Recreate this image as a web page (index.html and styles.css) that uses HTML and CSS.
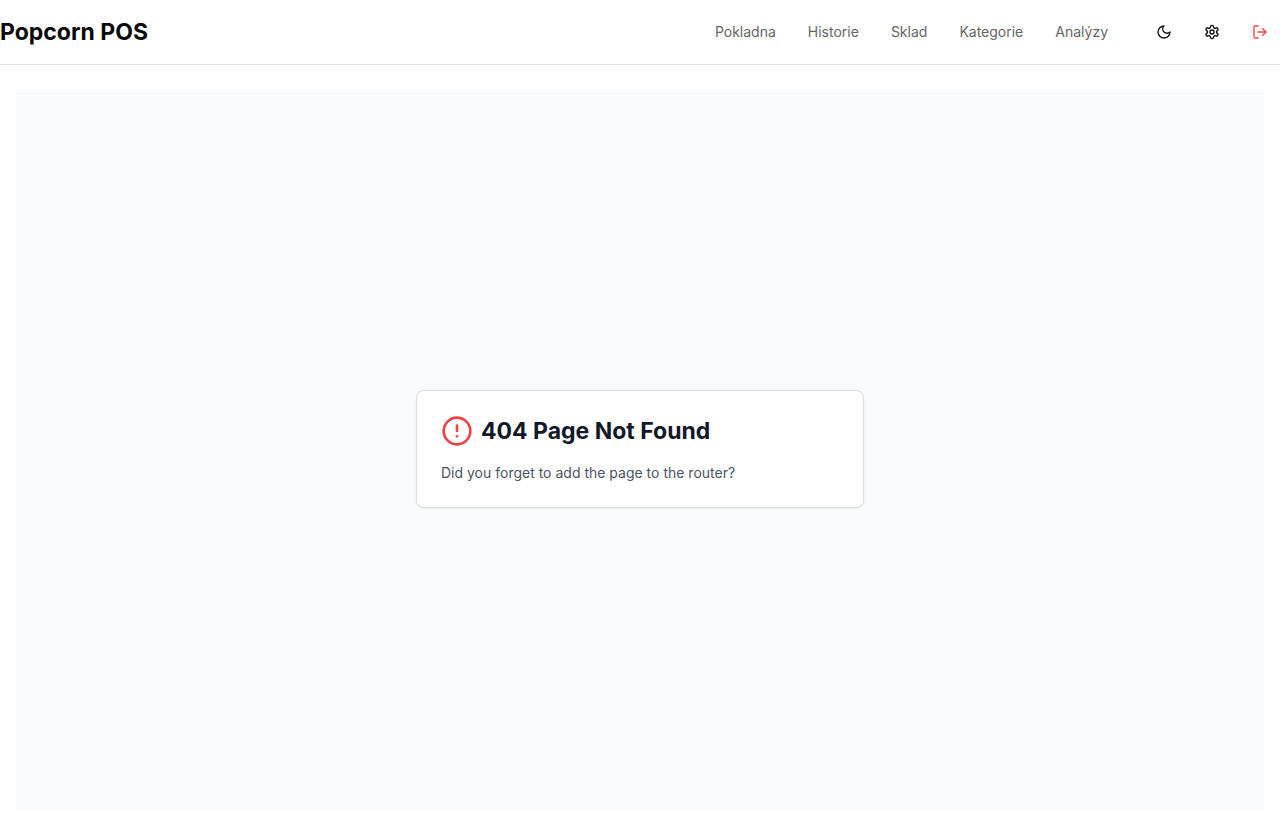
FILE: index.html
```html
<!DOCTYPE html>
<html lang="cs">
<head>
  <meta charset="utf-8">
  <meta name="viewport" content="width=device-width, initial-scale=1">
  <title>Popcorn POS</title>
  <link rel="stylesheet" href="styles.css">
</head>
<body>
  <header class="topbar">
    <a class="brand" href="#">Popcorn POS</a>
    <div class="topbar-right">
      <nav class="nav">
        <a href="#">Pokladna</a>
        <a href="#">Historie</a>
        <a href="#">Sklad</a>
        <a href="#">Kategorie</a>
        <a href="#">Analýzy</a>
      </nav>
      <div class="actions">
        <button class="icon-button" type="button" aria-label="Tmavý režim">
          <svg class="icon" viewBox="0 0 24 24"><path d="M12 3a6 6 0 0 0 9 9 9 9 0 1 1-9-9Z"/></svg>
        </button>
        <button class="icon-button" type="button" aria-label="Nastavení">
          <svg class="icon" viewBox="0 0 24 24"><path d="M12.22 2h-.44a2 2 0 0 0-2 2v.18a2 2 0 0 1-1 1.73l-.43.25a2 2 0 0 1-2 0l-.15-.08a2 2 0 0 0-2.73.73l-.22.38a2 2 0 0 0 .73 2.73l.15.1a2 2 0 0 1 1 1.72v.51a2 2 0 0 1-1 1.74l-.15.09a2 2 0 0 0-.73 2.73l.22.38a2 2 0 0 0 2.73.73l.15-.08a2 2 0 0 1 2 0l.43.25a2 2 0 0 1 1 1.73V20a2 2 0 0 0 2 2h.44a2 2 0 0 0 2-2v-.18a2 2 0 0 1 1-1.73l.43-.25a2 2 0 0 1 2 0l.15.08a2 2 0 0 0 2.73-.73l.22-.39a2 2 0 0 0-.73-2.73l-.15-.08a2 2 0 0 1-1-1.74v-.5a2 2 0 0 1 1-1.74l.15-.09a2 2 0 0 0 .73-2.73l-.22-.38a2 2 0 0 0-2.73-.73l-.15.08a2 2 0 0 1-2 0l-.43-.25a2 2 0 0 1-1-1.73V4a2 2 0 0 0-2-2z"/><circle cx="12" cy="12" r="3"/></svg>
        </button>
        <button class="icon-button danger" type="button" aria-label="Odhlásit se">
          <svg class="icon" viewBox="0 0 24 24"><path d="M9 21H5a2 2 0 0 1-2-2V5a2 2 0 0 1 2-2h4"/><path d="m16 17 5-5-5-5"/><path d="M21 12H9"/></svg>
        </button>
      </div>
    </div>
  </header>
  <main class="main">
    <section class="stage">
      <div class="card">
        <div class="card-head">
          <svg class="icon alert" viewBox="0 0 24 24" aria-hidden="true"><circle cx="12" cy="12" r="10"/><path d="M12 8v4"/><path d="M12 16h.01"/></svg>
          <h1>404 Page Not Found</h1>
        </div>
        <p>Did you forget to add the page to the router?</p>
      </div>
    </section>
  </main>
</body>
</html>
```
FILE: styles.css
```css
* {
  box-sizing: border-box;
}

body {
  display: flex;
  flex-direction: column;
  min-height: 100vh;
  margin: 0;
  background: #fff;
  color: #0a0a0a;
  font-family: Inter, "Liberation Sans", sans-serif;
  font-size: 14px;
  line-height: 20px;
}

.topbar {
  display: flex;
  align-items: center;
  justify-content: space-between;
  min-height: 65px;
  border-bottom: 1px solid #e0e0e0;
}

.brand {
  color: inherit;
  font-size: 23px;
  font-weight: 700;
  line-height: 34px;
  text-decoration: none;
}

.topbar-right {
  display: flex;
  align-items: center;
  gap: 36px;
}

.nav {
  display: flex;
  gap: 32px;
}

.nav a {
  color: #666;
  font-weight: 400;
  line-height: 22px;
  text-decoration: none;
}

.actions {
  display: flex;
  gap: 8px;
}

.icon-button {
  display: flex;
  align-items: center;
  justify-content: center;
  width: 40px;
  height: 40px;
  padding: 0;
  border: 0;
  border-radius: 6px;
  background: transparent;
  color: inherit;
  cursor: pointer;
}

.danger,
.alert {
  color: #ef4444;
}

.icon {
  width: 16px;
  height: 16px;
  fill: none;
  stroke: currentColor;
  stroke-width: 2;
  stroke-linecap: round;
  stroke-linejoin: round;
}

.main {
  display: flex;
  flex: 1;
  padding: 24px 16px;
}

.stage {
  display: flex;
  flex: 1;
  align-items: center;
  justify-content: center;
  background: #f9fafb;
}

.card {
  width: 100%;
  max-width: 448px;
  padding: 24px;
  border: 1px solid #e0e0e0;
  border-radius: 8px;
  background: #fff;
  box-shadow: 0 1px 2px rgba(0, 0, 0, 0.05);
}

.card-head {
  display: flex;
  align-items: center;
  gap: 8px;
}

.card-head .icon {
  width: 32px;
  height: 32px;
}

.card h1 {
  margin: 0;
  color: #111827;
  font-size: 23px;
  font-weight: 700;
  line-height: 32px;
}

.card p {
  margin: 16px 0 0;
  color: #4b5563;
}
```
